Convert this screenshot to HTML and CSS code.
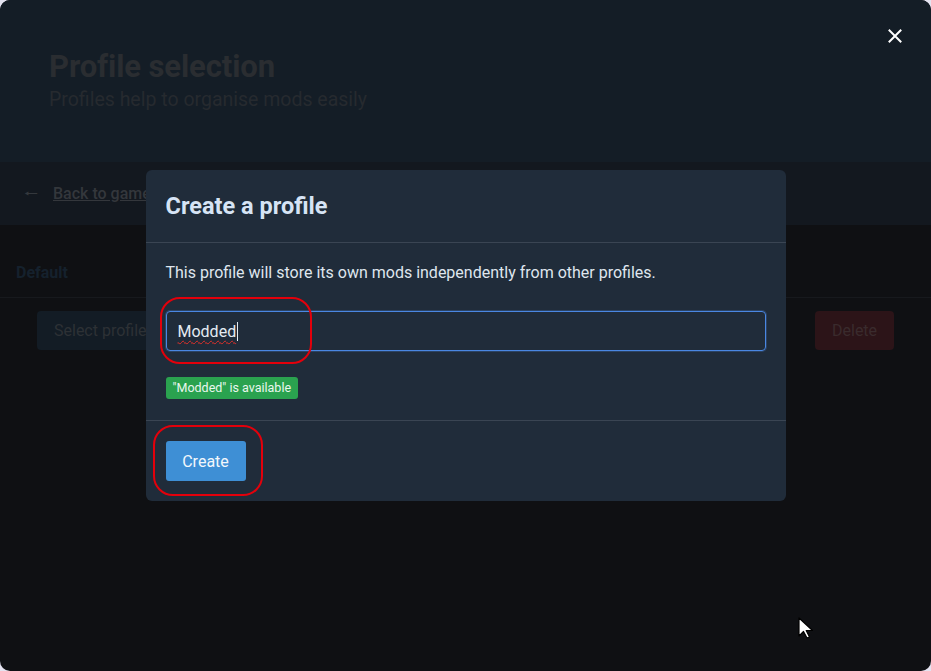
FILE: index.html
```html
<!DOCTYPE html>
<html>
<head>
<meta charset="utf-8">
<link rel="stylesheet" href="styles.css">
</head>
<body>
<div class="app">
  <header class="hero">
    <h1 class="hero-title">Profile selection</h1>
    <p class="hero-sub">Profiles help to organise mods easily</p>
  </header>
  <nav class="nav">
    <span class="nav-arrow">&#129040;</span>
    <a class="nav-link">Back to game selection</a>
  </nav>
  <main class="content">
    <div class="profile-row">Default</div>
    <div class="actions">
      <button class="btn-dim btn-select">Select profile</button>
      <button class="btn-dim btn-delete">Delete</button>
    </div>
  </main>

  <button class="close" aria-label="Close">
    <svg width="14" height="14" viewBox="0 0 14 14"><path d="M1.5 1.5L12.5 12.5M12.5 1.5L1.5 12.5" stroke="#fff" stroke-width="2" stroke-linecap="square"/></svg>
  </button>

  <div class="overlay">
    <div class="modal">
      <div class="modal-head">Create a profile</div>
      <div class="modal-body">
        <p class="modal-text">This profile will store its own mods independently from other profiles.</p>
        <div class="input"><span class="input-text">Modded</span><span class="caret"></span></div>
        <span class="badge">"Modded" is available</span>
      </div>
      <div class="modal-foot">
        <button class="btn-create">Create</button>
      </div>
    </div>
  </div>

  <div class="mark mark-input"></div>
  <div class="mark mark-create"></div>

  <svg class="cursor" width="16" height="22" viewBox="0 0 16 22"><path d="M1 1 L1 19 L5.5 14.5 L9 21 L11.5 20 L8.2 13.5 L14.5 13.5 Z" fill="#fff" stroke="#000" stroke-width="1.2" stroke-linejoin="round"/></svg>
</div>
</body>
</html>
```

FILE: styles.css
```css
* { box-sizing: border-box; }
html, body { margin: 0; padding: 0; }
body {
  background: #e4e3f0;
  font-family: Roboto, "Noto Sans", "Liberation Sans", sans-serif;
  width: 931px;
  height: 671px;
  overflow: hidden;
}
.app {
  position: relative;
  width: 931px;
  height: 671px;
  border-radius: 10px;
  overflow: hidden;
  background: #0f1013;
  display: flex;
  flex-direction: column;
}
.hero {
  height: 162px;
  background: #141d26;
  padding: 48px 49px 0;
}
.hero-title {
  margin: 0;
  font-size: 31px;
  font-weight: 700;
  color: #2a2d31;
  line-height: 38px;
  letter-spacing: -0.1px;
}
.hero-sub {
  margin: 0;
  font-size: 19.5px;
  color: #262a2f;
  line-height: 28px;
}
.nav {
  height: 63px;
  background: #13181f;
  display: flex;
  align-items: center;
  padding-left: 24px;
  gap: 15px;
}
.nav-arrow {
  color: #34383d;
  font-size: 16px;
  line-height: 1;
}
.nav-link {
  color: #34373c;
  font-size: 16px;
  font-weight: 500;
  text-decoration: underline;
}
.content {
  flex: 1;
  display: flex;
  flex-direction: column;
}
.profile-row {
  height: 73px;
  padding: 38px 16px 0;
  font-size: 16px;
  font-weight: 700;
  color: #15212d;
  border-bottom: 1px solid #17191d;
}
.actions {
  display: flex;
  justify-content: space-between;
  padding: 13px 37px 0;
}
.btn-dim {
  height: 39px;
  border: none;
  border-radius: 4px;
  font-family: inherit;
  font-size: 16px;
  padding: 0 17px;
}
.btn-select {
  background: #131c25;
  color: #2d3135;
  width: 150px;
  text-align: left;
}
.btn-delete {
  background: #2c1418;
  color: #3a2b2d;
  width: 79px;
}
.close {
  position: absolute;
  top: 29px;
  left: 888px;
  width: 14px;
  height: 14px;
  padding: 0;
  border: none;
  background: none;
  display: flex;
}
.overlay {
  position: absolute;
  inset: 0;
  display: flex;
  justify-content: center;
  align-items: flex-start;
  padding-top: 170px;
}
.modal {
  width: 640px;
  background: #202c3a;
  border-radius: 6px;
  display: flex;
  flex-direction: column;
}
.modal-head {
  height: 73px;
  padding: 0 20px;
  display: flex;
  align-items: center;
  font-size: 23.5px;
  font-weight: 700;
  color: #d6e4f5;
  border-bottom: 1px solid #3a4553;
}
.modal-body {
  padding: 20px 20px 21px;
  display: flex;
  flex-direction: column;
  align-items: flex-start;
  border-bottom: 1px solid #3a4553;
}
.modal-text {
  margin: 0 0 28px;
  font-size: 16px;
  line-height: 20px;
  color: #dfe6ee;
}
.input {
  width: 600px;
  height: 40px;
  border: 1px solid #4a87e2;
  border-radius: 4px;
  box-shadow: 0 0 0 1px rgba(74,135,226,0.25);
  display: flex;
  align-items: center;
  padding-left: 11px;
  margin-bottom: 26px;
}
.input-text {
  font-size: 16px;
  color: #e4ebf2;
  text-decoration: underline wavy #e0302a;
  text-decoration-thickness: 1px;
  text-underline-offset: 3px;
}
.caret {
  width: 1px;
  height: 19px;
  background: #e4ebf2;
  margin-left: 1px;
}
.badge {
  background: #2aa24f;
  color: #e9f7ee;
  font-size: 12.5px;
  line-height: 22px;
  height: 22px;
  padding: 0 7px;
  border-radius: 3px;
}
.modal-foot {
  padding: 20px;
}
.btn-create {
  width: 80px;
  height: 40px;
  border: none;
  border-radius: 3px;
  background: #3e8fd5;
  color: #f2f7fc;
  font-family: inherit;
  font-size: 16px;
}
.mark {
  position: absolute;
  border: 2px solid #e3000b;
  border-radius: 20px;
}
.mark-input {
  left: 160px;
  top: 297px;
  width: 152px;
  height: 67px;
}
.mark-create {
  left: 153px;
  top: 425px;
  width: 110px;
  height: 71px;
}
.cursor {
  position: absolute;
  left: 798px;
  top: 617px;
}
```
